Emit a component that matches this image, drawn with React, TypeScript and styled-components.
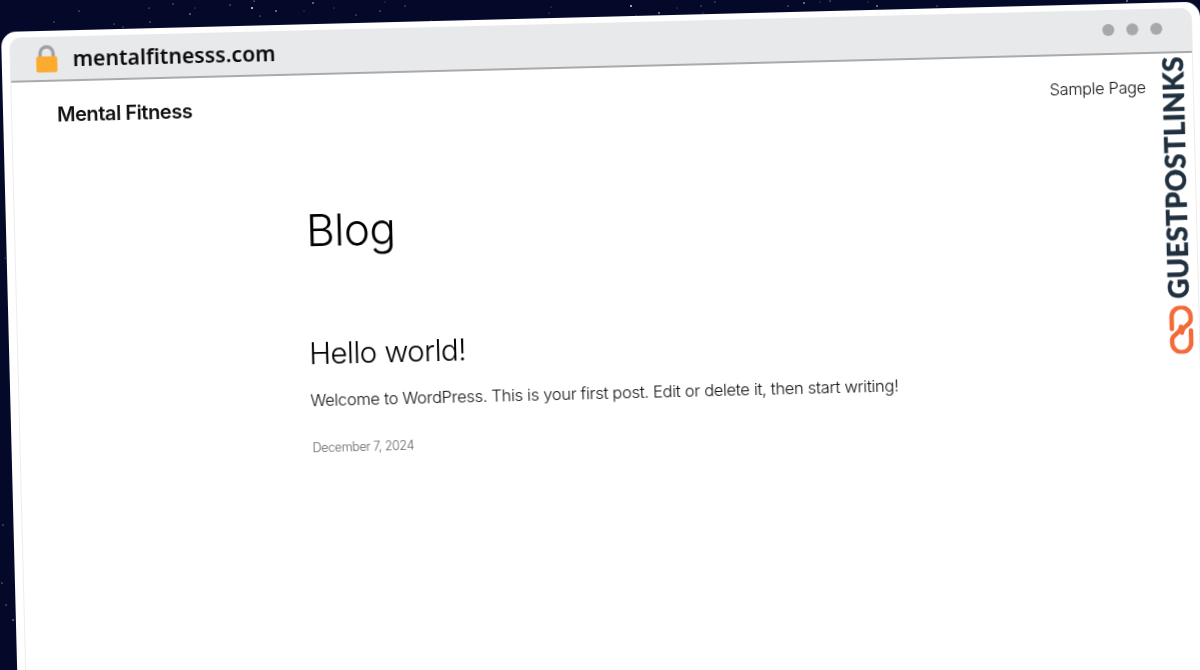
import React from "react";
import styled, { createGlobalStyle } from "styled-components";

const Global = createGlobalStyle`
  html, body { margin: 0; padding: 0; width: 100%; height: 100%; overflow: hidden; background: #040929; }
`;

const Scene = styled.div`
  position: relative;
  width: 1200px;
  height: 670px;
  overflow: hidden;
  background: #040929;
`;

const Stars = styled.svg`
  position: absolute;
  inset: 0;
`;

const Frame = styled.div`
  position: absolute;
  left: 1px;
  top: 32px;
  width: 1199px;
  height: 800px;
  box-sizing: border-box;
  padding: 6px 8px 0 8px;
  background: #fff;
  border-radius: 15px;
  transform-origin: 0 0;
  transform: rotate(-1.45deg);
  filter: blur(0.3px);
`;

const Browser = styled.div`
  height: 100%;
  display: flex;
  flex-direction: column;
  border-left: 1px solid #ececee;
  border-right: 1px solid #ececee;
  border-radius: 11px 11px 0 0;
`;

const AddressBar = styled.div`
  display: flex;
  align-items: center;
  height: 43px;
  flex: none;
  padding: 0 29px 0 24px;
  background: #e8e9eb;
  border-bottom: 2px solid #a8aaad;
  border-radius: 11px 11px 0 0;
`;

const Url = styled.span`
  margin-left: 14px;
  font: 600 21.2px/1 "Noto Sans", sans-serif;
  color: #0b0b10;
`;

const Dots = styled.div`
  display: flex;
  gap: 12px;
  margin-left: auto;
  margin-bottom: 4px;
`;

const Dot = styled.span`
  width: 12px;
  height: 12px;
  border-radius: 50%;
  background: #a7a8ac;
`;

const Page = styled.div`
  flex: 1;
  position: relative;
  font-family: Inter, sans-serif;
  color: #111;
`;

const Header = styled.header`
  display: flex;
  justify-content: space-between;
  align-items: center;
  padding: 21px 47px 0 45px;
`;

const SiteTitle = styled.div`
  font-size: 20px;
  line-height: 24px;
  font-weight: 600;
  letter-spacing: -0.45px;
`;

const NavLink = styled.a`
  font-size: 16.3px;
  line-height: 24px;
  font-weight: 300;
  letter-spacing: -0.3px;
  color: #111;
`;

const Main = styled.main`
  padding: 82px 0 0 291px;
`;

const PageTitle = styled.h1`
  margin: 0;
  font-size: 44px;
  line-height: 56px;
  font-weight: 300;
  letter-spacing: -0.6px;
  color: #000;
`;

const PostTitle = styled.h2`
  margin: 76px 0 0;
  font-size: 29.4px;
  line-height: 40px;
  font-weight: 300;
  letter-spacing: -0.5px;
  color: #000;
`;

const Excerpt = styled.p`
  margin: 14px 0 0;
  font-size: 16.5px;
  line-height: 24px;
  font-weight: 300;
  letter-spacing: -0.3px;
  color: #111;
`;

const DateLine = styled.div`
  margin: 27px 0 0 1px;
  font-size: 12.5px;
  line-height: 18px;
  font-weight: 300;
  letter-spacing: -0.37px;
  color: #666;
`;

const Brand = styled.div`
  position: absolute;
  top: 3px;
  right: 5px;
  display: flex;
  align-items: center;
  gap: 7px;
  writing-mode: vertical-rl;
  transform: rotate(180deg);
`;

const BrandText = styled.span`
  font: 900 27.6px/1 Lato, sans-serif;
  color: #20303f;
  letter-spacing: 0.3px;
  -webkit-text-stroke: 0.4px #20303f;
`;

const Lock = () => (
  <svg width="24" height="28" viewBox="0 0 24 28">
    <path d="M5.5 13V8.500a6.500 6.500 0 0 1 13 0V13" fill="none" stroke="#9fa1a5" strokeWidth="3.4" />
    <rect x="1.500" y="11.500" width="21" height="16" rx="2" fill="#fbab2d" />
  </svg>
);

const ChainLogo = () => (
  <svg width="28" height="48" viewBox="0 0 28 48">
    <path
      d="M3 23V11a9.500 9.500 0 0 1 19 0v3c0 6-9 6-9 13"
      fill="none"
      stroke="#f26b3a"
      strokeWidth="4.500"
      strokeLinecap="round"
    />
    <path
      d="M22 25v12a9.500 9.500 0 0 1-19 0v-3c0-6 9-6 9-13"
      fill="none"
      stroke="#f26b3a"
      strokeWidth="4.500"
      strokeLinecap="round"
    />
  </svg>
);

const STARS: [number, number, number][] = [
  [79, 11, 0.6], [54, 22, 0.5], [114, 24, 0.5], [123, 27, 0.5], [150, 22, 0.6], [149, 8, 0.5], [173, 4, 0.6],
  [190, 14, 0.7], [195, 8, 0.4], [230, 5, 0.6], [252, 8, 1.1], [254, 1, 0.6], [260, 16, 0.5], [276, 11, 0.8],
  [304, 11, 0.4], [313, 3, 0.8], [334, 8, 0.4], [356, 15, 0.5], [380, 11, 0.6], [385, 2, 0.4], [405, 6, 0.5],
  [431, 21, 0.5], [549, 13, 0.4], [551, 7, 0.4], [631, 6, 1], [659, 13, 0.8], [636, 16, 0.5], [677, 8, 0.4],
  [701, 6, 0.5], [715, 2, 0.5], [703, 13, 0.4], [788, 6, 0.6], [804, 3, 0.8], [830, 1, 0.6], [820, 2, 0.4],
  [877, 6, 0.8], [868, 2, 0.4], [937, 6, 0.5], [1127, 1, 0.8],
  [3, 525, 0.6], [2, 583, 0.6], [6, 605, 0.6], [13, 620, 0.7], [5, 258, 0.4],
];

export default function App() {
  return (
    <Scene>
      <Global />
      <Stars width="1200" height="670" aria-hidden>
        {STARS.map(([x, y, r]) => (
          <circle key={`${x}-${y}`} cx={x} cy={y} r={r} fill="#cfd3e6" />
        ))}
      </Stars>
      <Frame>
        <Browser>
          <AddressBar>
            <Lock />
            <Url>mentalfitnesss.com</Url>
            <Dots>
              <Dot />
              <Dot />
              <Dot />
            </Dots>
          </AddressBar>
          <Page>
            <Header>
              <SiteTitle>Mental Fitness</SiteTitle>
              <NavLink>Sample Page</NavLink>
            </Header>
            <Main>
              <PageTitle>Blog</PageTitle>
              <PostTitle>Hello world!</PostTitle>
              <Excerpt>Welcome to WordPress. This is your first post. Edit or delete it, then start writing!</Excerpt>
              <DateLine>December 7, 2024</DateLine>
            </Main>
            <Brand>
              <ChainLogo />
              <BrandText>GUESTPOSTLINKS</BrandText>
            </Brand>
          </Page>
        </Browser>
      </Frame>
    </Scene>
  );
}
